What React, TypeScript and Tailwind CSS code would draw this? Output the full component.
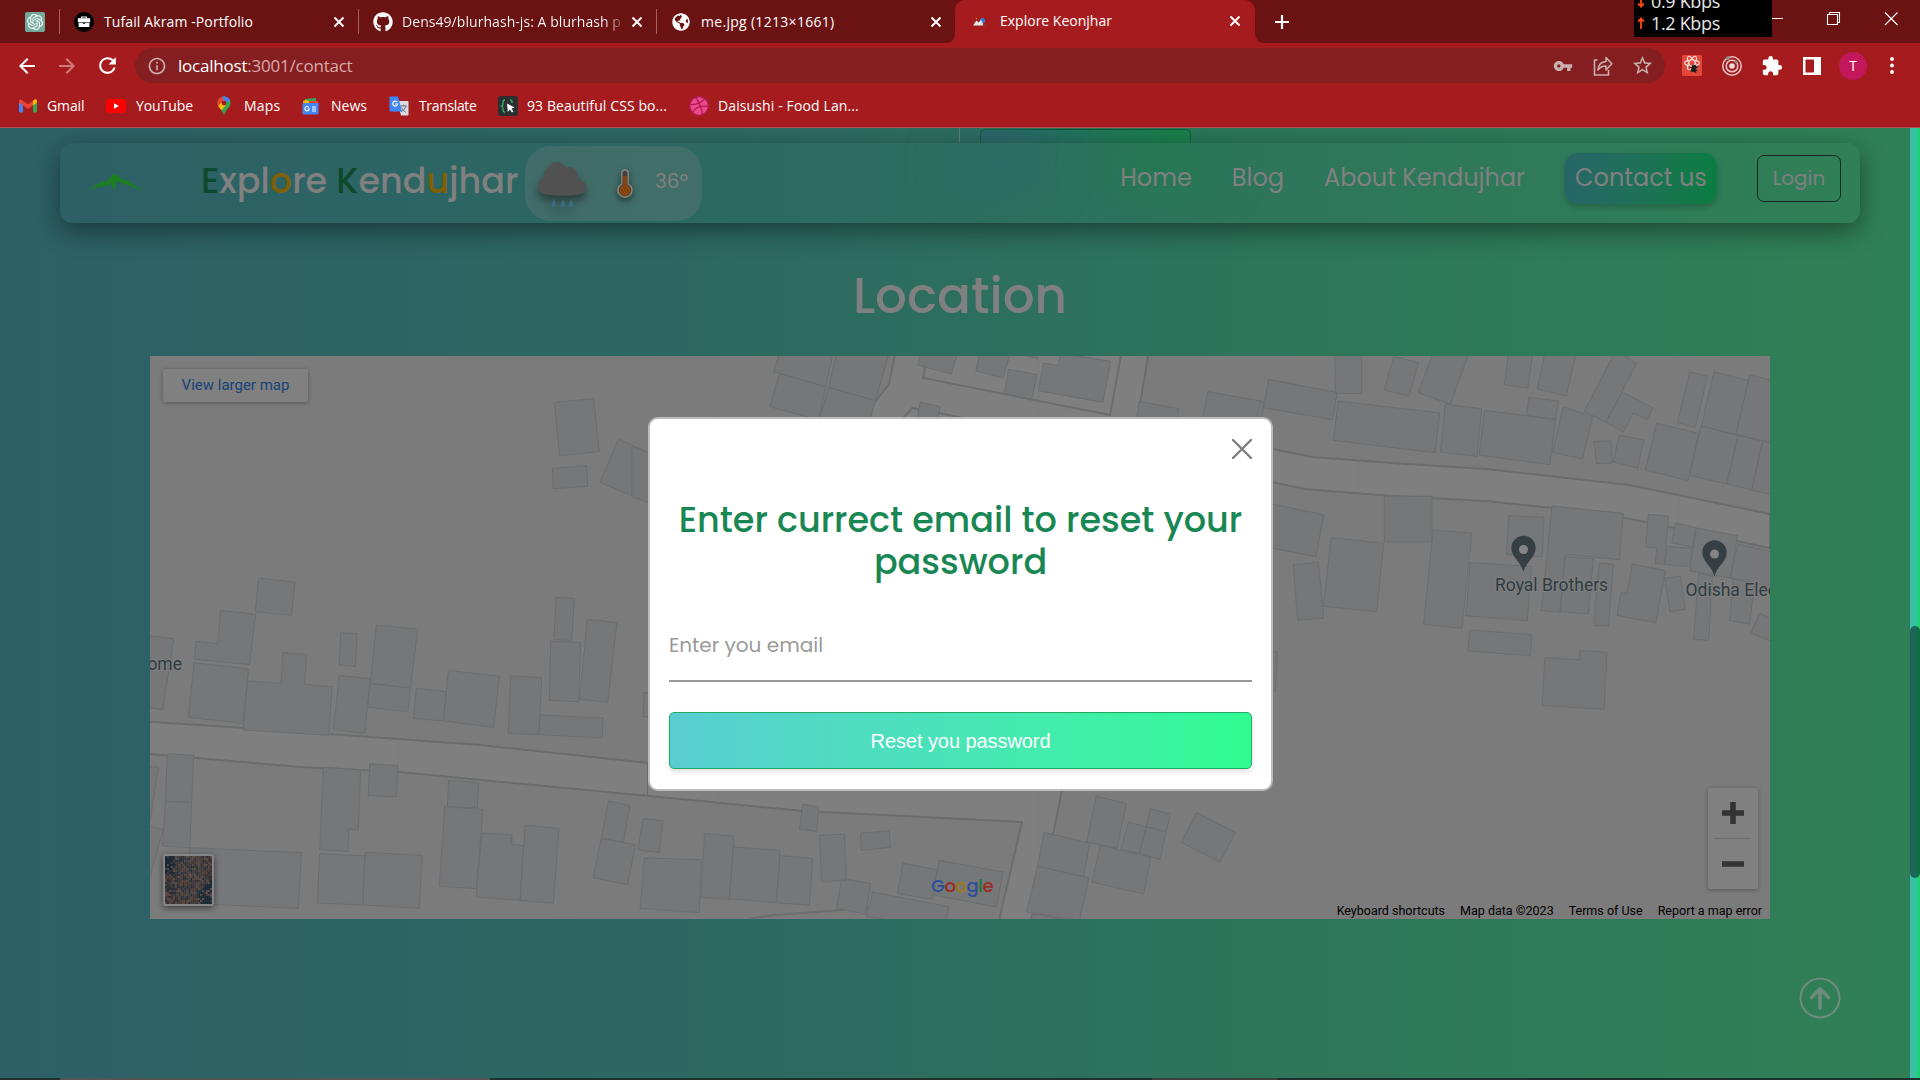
import React from "react";
import { SiOpenai, SiDribbble } from "react-icons/si";
import { FaGithub, FaGlobeAmericas } from "react-icons/fa";
import { MdVpnKey, MdExtension, MdStarOutline, MdArrowBack, MdArrowForward, MdRefresh, MdInfoOutline } from "react-icons/md";

/* ---------- Browser chrome ---------- */

function CloseGlyph() {
  return (
    <svg viewBox="0 0 12 12" className="h-3 w-3 shrink-0">
      <path d="M1.5 1.5l9 9M10.5 1.5l-9 9" stroke="#fff" strokeWidth="1.9" />
    </svg>
  );
}

function PortfolioIcon() {
  return (
    <svg viewBox="0 0 20 20" className="h-5 w-5 shrink-0">
      <circle cx="10" cy="10" r="10" fill="#000" />
      <path d="M7.6 6.4V5h4.8v1.4" fill="none" stroke="#fff" strokeWidth="1.1" />
      <rect x="3.8" y="6.2" width="12.4" height="4" rx=".6" fill="#fff" />
      <path d="M4.6 10.8h4.2v1h2.4v-1h4.2v3.4q0 .8-.8.8H5.4q-.8 0-.8-.8z" fill="#fff" />
    </svg>
  );
}

function MountainFavicon() {
  return (
    <svg viewBox="0 0 16 12" className="h-3 w-4 shrink-0">
      <circle cx="10.500" cy="5.500" r="2.600" fill="#2f7fd6" />
      <path d="M1 10.500l3.500-5 2 2 2.500-2.500 3 5.500z" fill="#e6e6e6" />
      <path d="M3.500 2.500l2 1-1 1.500z" fill="#a5762b" />
      <path d="M11.500 8.500l3 2.500h-4z" fill="#7d3b2c" />
    </svg>
  );
}

function TabStrip() {
  return (
    <div className="relative flex h-[43px] w-full items-center bg-[#6b1213] text-[14px] text-white">
      <div className="flex h-[42px] w-[60px] shrink-0 items-center pl-[25px]">
        <span className="flex h-5 w-5 items-center justify-center rounded-[2px] bg-[#74aa9c]">
          <SiOpenai className="h-4 w-4" />
        </span>
        <span className="ml-[14px] h-[25px] w-px bg-[#a3605f]" />
      </div>
      <div className="flex h-[42px] w-[299px] shrink-0 items-center pl-[14px]">
        <PortfolioIcon />
        <span className="mb-px ml-[10px] w-[229px] whitespace-nowrap tracking-[0.11px]">Tufail Akram -Portfolio</span>
        <CloseGlyph />
        <span className="ml-[13px] h-[25px] w-px bg-[#a3605f]" />
      </div>
      <div className="flex h-[42px] w-[297px] shrink-0 items-center pl-[14px]">
        <FaGithub className="h-5 w-5 shrink-0" />
        <span className="mb-px ml-[9px] w-[221px] shrink-0 overflow-hidden bg-[linear-gradient(90deg,#fff_92%,#ffffff20_100%)] bg-clip-text whitespace-nowrap tracking-[0.056px] text-transparent">
          Dens49/blurhash-js: A blurhash p
        </span>
        <span className="ml-[8px] flex"><CloseGlyph /></span>
        <span className="ml-[13px] h-[25px] w-px shrink-0 bg-[#a3605f]" />
      </div>
      <div className="flex h-[42px] w-[299px] shrink-0 items-center pl-[16px]">
        <FaGlobeAmericas className="h-[18px] w-[18px] shrink-0" />
        <span className="mb-px ml-[11px] w-[229px] whitespace-nowrap tracking-[0.3px]">me.jpg (1213×1661)</span>
        <CloseGlyph />
      </div>
      <div className="relative flex h-[43px] w-[300px] shrink-0 items-center rounded-t-[10px] bg-[#a61c1e] pb-px pl-[17px]">
        <svg viewBox="0 0 320 10" className="absolute -left-[10px] bottom-0 h-[10px] w-[320px]">
          <path d="M0 10Q10 10 10 0V10zM320 10Q310 10 310 0V10z" fill="#a61c1e" />
        </svg>
        <MountainFavicon />
        <span className="mb-px ml-[12px] w-[229px] whitespace-nowrap">Explore Keonjhar</span>
        <CloseGlyph />
      </div>
      <svg viewBox="0 0 16 16" className="ml-[19px] h-4 w-4">
        <path d="M8 1v14M1 8h14" stroke="#fff" strokeWidth="2.2" />
      </svg>
      <div className="ml-auto flex h-[37px] w-[138px] flex-col justify-end self-start overflow-hidden bg-black pb-[3px] pl-[3px] text-[18px] leading-[22px] tracking-[-0.33px] text-[#e6e6e6]">
        {["0.9 Kbps", "1.2 Kbps"].map((rate, i) => (
          <div key={rate} className="flex shrink-0 items-center">
            <svg viewBox="0 0 8 14" className="mr-[6px] h-[13px] w-2">
              <path d={i ? "M4 13V2M1 5l3-3.5L7 5" : "M4 1v11M1 9l3 3.5L7 9"} stroke="#ff4a12" strokeWidth="1.9" fill="none" />
            </svg>
            {rate}
          </div>
        ))}
      </div>
      <div className="flex h-[37px] w-[148px] items-center self-start">
        <svg viewBox="0 0 148 37" className="h-[37px] w-[148px]" fill="none" stroke="#fff" strokeWidth="1.1">
          <path d="M0 18.500h11M55.500 14.500h10v10h-10zM57.500 14.500v-2h10v10h-2M113 12.500l12.500 12.500M125.500 12.500L113 25" />
        </svg>
      </div>
    </div>
  );
}

function AddressBar() {
  return (
    <div className="flex h-[45px] w-full items-center bg-[#a61c1e] pl-[15px] text-white">
      <MdArrowBack className="h-6 w-6" />
      <MdArrowForward className="ml-4 h-6 w-6 text-[#d07a7b]" />
      <MdRefresh className="ml-[16px] h-[25px] w-[25px]" />
      <div className="ml-[15px] flex h-[35px] w-[1530px] items-center rounded-full bg-[#841e20] pl-[12px] text-[#c9b0b0]">
        <MdInfoOutline className="h-[20px] w-[20px]" />
        <span className="ml-[11px] text-[17px] tracking-[-0.22px] text-[#dba9a9]">
          <span className="text-white">localhost</span>:3001/contact
        </span>
        <MdVpnKey className="ml-auto h-5 w-5" />
        <svg viewBox="0 0 20 22" className="ml-[20px] h-[22px] w-5" fill="none" stroke="currentColor" strokeWidth="1.600">
          <path d="M4.500 5H1.500v15h14v-5" />
          <path d="M5 15q.5-8 8-8.500V2.500l5.800 6.200L13 15v-4q-5-.2-8 4z" strokeLinejoin="round" />
        </svg>
        <MdStarOutline className="mr-[11px] ml-[18px] h-[23px] w-[23px]" />
      </div>
      <svg viewBox="0 0 20 21" className="ml-[17px] h-[21px] w-5">
        <rect width="20" height="21" rx="1.500" fill="#e2473a" />
        <g fill="none" stroke="#f6dcd8" strokeWidth="1.100">
          <ellipse cx="10" cy="8" rx="7.500" ry="3" />
          <ellipse cx="10" cy="8" rx="7.500" ry="3" transform="rotate(60 10 8)" />
          <ellipse cx="10" cy="8" rx="7.500" ry="3" transform="rotate(120 10 8)" />
        </g>
        <ellipse cx="12" cy="13.500" rx="2.600" ry="3.800" fill="#1d1d1d" transform="rotate(20 12 13.500)" />
        <path d="M7.500 11.500l8 4.500M8.500 16.500l7.500-5M10 10l4 8" stroke="#1d1d1d" />
      </svg>
      <svg viewBox="0 0 20 20" className="ml-[20px] h-5 w-5" fill="none" stroke="#e5c6c6" strokeWidth="1.500">
        <circle cx="10" cy="10" r="9.200" />
        <circle cx="10" cy="10" r="5.800" />
        <circle cx="10" cy="10" r="2.800" fill="#e8dede" stroke="none" />
        <circle cx="5.800" cy="2.200" r="2" fill="#8d8d8d" stroke="none" />
        <circle cx="14" cy="6" r="1.500" fill="#8d8d8d" stroke="none" />
      </svg>
      <MdExtension className="ml-[19px] h-[22px] w-[22px]" />
      <svg viewBox="0 0 18 18" className="ml-[20px] h-[18px] w-[18px]">
        <path d="M0 0h18v18H0zM2.500 2.500v13h8.500v-13z" fill="#fff" fillRule="evenodd" />
      </svg>
      <span className="ml-[18px] flex h-7 w-7 items-center justify-center rounded-full bg-[#c2185b] text-[14px]">T</span>
      <svg viewBox="0 0 4 17" className="ml-[23px] h-[17px] w-1" fill="#fff">
        <circle cx="2" cy="2" r="1.900" />
        <circle cx="2" cy="8.500" r="1.900" />
        <circle cx="2" cy="15" r="1.900" />
      </svg>
    </div>
  );
}

const bookmarkIcons = {
  gmail: (
    <svg viewBox="0 0 20 20" className="h-5 w-5">
      <path d="M0 4.500V15q0 1.500 1.500 1.500H4V8z" fill="#4285f4" />
      <path d="M18 4.500V15q0 1.500-1.500 1.500H14V8z" fill="#34a853" />
      <path d="M0 5q.5-3 3-1l6 4.500L15 4v4.500L9 13 0 6.500z" fill="#ea4335" />
      <path d="M14 4.800q3.500-3 4 .2v1.500L14 9.500z" fill="#fbbc04" />
    </svg>
  ),
  youtube: (
    <svg viewBox="0 0 20 20" className="h-5 w-5">
      <rect x="0" y="3" width="20" height="14" rx="3.500" fill="#f00" />
      <path d="M8 7.200l5 2.800-5 2.800z" fill="#fff" />
    </svg>
  ),
  maps: (
    <svg viewBox="0 0 20 20" className="h-5 w-5">
      <clipPath id="mapspin"><path d="M9 0.500a6.500 6.500 0 0 1 6.500 6.500c0 4.500-5 6-6.500 12.500C7.500 13 2.500 11.500 2.500 7A6.500 6.500 0 0 1 9 0.500z" /></clipPath>
      <g clipPath="url(#mapspin)">
        <path d="M0 0h20v20H0z" fill="#34a853" />
        <path d="M5 0h13v4L9 7z" fill="#4285f4" />
        <path d="M0 0h7l2 5-5 6-4-2z" fill="#ea4335" />
        <path d="M2 11l7-7 2 5-5 6z" fill="#fbbc04" />
        <path d="M7 0h10L13 5z" fill="#4285f4" />
      </g>
      <circle cx="9" cy="7" r="2.400" fill="#a61c1e" />
    </svg>
  ),
  news: (
    <svg viewBox="0 0 20 20" className="h-5 w-5">
      <path d="M4 3l11-1v6H4z" fill="#34a853" />
      <path d="M2 5l3-1 9 3-1 4H3z" fill="#fbbc04" />
      <path d="M8 5h9v6H8z" fill="#ea4335" />
      <rect x="1.500" y="7" width="16" height="11.500" rx="1.200" fill="#4285f4" />
      <path d="M8 11.500A2.200 2.200 0 1 0 8.300 13H6.500M11 11h4M11 13h4M11 15h4" stroke="#fff" strokeWidth="1.100" fill="none" />
    </svg>
  ),
  translate: (
    <svg viewBox="0 0 20 20" className="h-5 w-5">
      <path d="M8 5h10.500q1 0 1 1v12.500q0 1-1 1H12z" fill="#dadce0" />
      <path d="M11 10h7M14.500 8.500V10M17 10q-1 4-5 6M12.500 11.500q1 3 4.500 5" stroke="#6d7680" fill="none" />
      <path d="M1.500 0.500H9l4 15H1.500q-1 0-1-1v-13q0-1 1-1z" fill="#4285f4" />
      <path d="M8.200 6A2.500 2.500 0 1 0 8.700 8H6.300" stroke="#fff" strokeWidth="1.200" fill="none" />
    </svg>
  ),
  css: (
    <svg viewBox="0 0 20 20" className="h-5 w-5">
      <rect width="20" height="20" rx="3" fill="#2b2f30" />
      <path d="M7 4Q5 4 5 6v2q0 1.500-1.500 2Q5 10.500 5 12v2q0 2 2 2M12 4q2 0 2 2v1" stroke="#33b36b" strokeWidth="1.300" fill="none" />
      <path d="M9 7.500l7.500 4-3 1 2 3.200-1.600.9-1.900-3.200L9.800 16z" fill="#fff" />
    </svg>
  ),
  dribbble: (
    <svg viewBox="0 0 20 20" className="h-5 w-5" fill="none" stroke="#b31b59" strokeWidth="1.300">
      <circle cx="10" cy="10" r="9.300" fill="#ea4c89" />
      <path d="M6.500 1.500Q12 8 13.500 18.500M1 8.500q9 .5 14.500-5.500M3.500 16.500q4-8 15.500-6" />
    </svg>
  ),
};

function BookmarksBar() {
  return (
    <div className="flex h-[40px] w-full items-center border-b border-[#b5504f] bg-[#a61c1e] pb-[4px] pl-[19px] text-[14px] text-white">
      <div className="flex w-[87px] items-center gap-[8px]">{bookmarkIcons.gmail}<span className="tracking-[-0.1px]">Gmail</span></div>
      <div className="flex w-[109px] items-center gap-[10px]">{bookmarkIcons.youtube}<span className="tracking-[-0.08px]">YouTube</span></div>
      <div className="flex w-[86px] items-center gap-[9px]">{bookmarkIcons.maps}<span className="tracking-[0.22px]">Maps</span></div>
      <div className="flex w-[88px] items-center gap-[10px]">{bookmarkIcons.news}<span>News</span></div>
      <div className="flex w-[109px] items-center gap-[10px]">{bookmarkIcons.translate}<span className="tracking-[-0.35px]">Translate</span></div>
      <div className="flex w-[191px] items-center gap-[9px]">{bookmarkIcons.css}<span className="tracking-[0.1px]">93 Beautiful CSS bo...</span></div>
      <div className="flex items-center gap-[9px]">{bookmarkIcons.dribbble}<span className="tracking-[0.12px]">Daisushi - Food Lan...</span></div>
    </div>
  );
}

/* ---------- Site header ---------- */

function WeatherPill() {
  return (
    <div className="flex h-[75px] w-[177px] items-center rounded-[26px] bg-[#808080]/25 pl-[12px]">
      <svg viewBox="0 0 52 50" className="mt-1 h-[50px] w-[52px] drop-shadow-[0_6px_4px_rgba(0,0,0,0.4)]">
        <path d="M9 34.500Q1 33 1 26q0-7 7-8.500Q6 11 11 8q3-6 9-6 7 0 9 6 3-2 7 0 5 2 5 8 0 2-.5 3.500Q49 20 49 27q0 6-7 7.500Q25 37 9 34.500z" fill="#515151" />
        <path d="M17 39l-2.500 6a2.300 2.300 0 1 0 4.600 0zM26 39l-2.500 6a2.300 2.300 0 1 0 4.600 0zM34 39l-2.500 6a2.300 2.300 0 1 0 4.600 0z" fill="#3d6b85" />
      </svg>
      <svg viewBox="0 0 16 30" className="mt-px ml-[28px] h-[30px] w-4 drop-shadow-[0_3px_3px_rgba(0,0,0,0.5)]">
        <path d="M4.800 4.200a3.200 3.200 0 0 1 6.400 0V15a7 7 0 1 1-6.400 0z" fill="#4b3d34" stroke="#8b8b8b" strokeWidth="1.300" />
        <path d="M6.200 7h3.600v9a5.700 5.700 0 1 1-3.600 0z" fill="#85450f" />
      </svg>
      <span className="mb-[4px] ml-[22px] text-[20px] text-[#808080]">36º</span>
    </div>
  );
}

function SiteHeader() {
  return (
    <header className="relative flex h-[80px] w-[1800px] items-center overflow-visible rounded-[12px] shadow-[0_8px_26px_rgba(0,0,0,0.42)]">
      <svg viewBox="0 0 60 20" className="mt-[-3px] ml-[27px] h-5 w-[60px]">
        <path d="M0 18.500L16 9l3 1 7-8 2 .5 2 1 7 5 3-.5 8 6 10 5-13-4-5-3-3 1-5-4-1 2-3-2 1 10-5-6 1-4-4 5-3-1-2 2-3-.5z" fill="#1b7f1f" />
      </svg>
      <h1 className="mb-[4px] ml-[54px] w-[324px] text-[35px] font-medium whitespace-nowrap text-[#808080]">
        <span className="text-[#0d4a2b]">E</span>xpl<span className="text-[#806004]">o</span>re{" "}
        <span className="text-[#0d4a2b]">K</span>end<span className="text-[#806004]">u</span>jhar
      </h1>
      <WeatherPill />
      <nav className="mb-[10px] ml-auto flex items-center gap-10 pr-[19px] text-[24px] whitespace-nowrap text-[#808080]">
        <a>Home</a>
        <a>Blog</a>
        <a>About Kendujhar</a>
        <a className="flex h-[51px] w-[152px] items-center justify-center rounded-[13px] bg-linear-to-r from-[#286568] to-[#0a7d40] shadow-[0_3px_6px_rgba(0,0,0,0.2)]">Contact us</a>
        <a className="flex h-[47px] w-[84px] items-center justify-center rounded-[7px] border border-[#122a24] text-[20px]">Login</a>
      </nav>
    </header>
  );
}

/* ---------- Map ---------- */

const sheetNorthWest =
  "M1243 187L1361 176 1378 335 1259 347zM1237 385L1340 377 1343 439 1240 446zM1435 298L1560 352V502L1380 427z" +
  "M356 714L465 727 454 826 346 815z";
const sheetSouthWest =
  "M-10 12L101 26 68 239-10 228zM242-59L347-47 328 104 163 87 169 34 233 41zM162 98L326 117 308 280 145 262z" +
  "M323 153L424 160 429 68 500 73 494 163 576 170 567 316 310 300zM602 8L651 11 646 109 598 105z" +
  "M709-15L833-2 811 174 691 160zM691 160L811 174 804 245 683 232zM598 136L691 146 674 310 580 298z" +
  "M829 175L918 185 910 273 820 265zM925 121L1078 139 1061 292 910 273zM1112 138L1205 143 1197 314 1105 310z" +
  "M1200 255L1389 264 1387 324 1197 314zM1248-98L1303-95 1295 31 1242 29zM1232 34L1322 37 1316 215 1228 211z" +
  "M1342-32L1431-22 1403 217 1319 208zM1516 188L1560 190V265L1510 260z" +
  "M82 371L161 376 155 517 76 514zM76 514L155 517 149 653 68 648zM-10 405L55 412 30 575-10 720zM-10 576L69 599 20 780-10 780z" +
  "M149 653L485 668 475 835 140 820zM550 412L662 419 655 599 626 598 624 664 539 659zM689 401L774 406 769 500 685 497z" +
  "M539 671L675 678 668 825 532 819zM676 667L847 676 838 835 668 825zM926 451L1016 458 1012 534 922 530z" +
  "M914 529L1029 539 1009 776 898 769zM1026 609L1116 615 1115 644 1150 647 1140 811 1009 801zM1156 586L1257 595 1240 820 1140 811z" +
  "M1405 513L1470 527 1450 637 1384 625zM1384 625L1486 645 1463 764 1359 743z";
const sheetNorth =
  "M345 30L475 30 455 140 327 95zM342 100L455 140 437 240 318 200zM484 30L612 30 577 182 462 142zM462 142L577 182 563 240 440 235z" +
  "M688 30L780 30 763 102 681 75zM834 30L910 30 889 114 823 93zM903 88L972 104 960 178 893 160zM945 47L975 47 974 57z" +
  "M1031 40L1153 64 1134 187 976 152 989 69 1024 77zM687 186L735 200 730 240 680 232zM1224 184L1320 206 1315 240 1215 240z" +
  "M1391 155L1530 185 1520 240 1379 235zM1540 120L1600 130V210L1530 201z" +
  "M-20 320L25 340V490L-20 470zM10 1058L30 1060V1130L8 1130z";
const sheetNorthEast =
  "M26 119L232 157 217 239 10 203zM224 30L305 30V160L227 160zM401 50L475 67 448 168 373 150zM522 30L630 30 571 193 475 158z" +
  "M235 183L539 219 525 338 220 301zM556 193L665 206 651 349 541 336zM674 211L886 238 870 374 657 345zM806 172L895 183 886 238 800 227z" +
  "M747 30L820 30 803 145 733 134zM857 30L950 30 919 167 832 147zM910 200L998 230 968 357 878 337z" +
  "M1068 30L1129 71 1038 247 973 214zM1087 157L1178 203 1161 239 1120 219 1090 276 1038 247zM1002 305L1052 302 1057 369 1010 371z" +
  "M1077 286L1151 300 1133 384 1061 366zM1190 250L1316 280 1285 422 1156 390zM1289 96L1342 109 1306 262 1252 248z" +
  "M1362 96L1465 122 1428 283 1324 258zM1469 105L1560 127V315L1428 283zM1324 258L1434 287 1400 432 1288 406zM1434 287L1508 303 1475 450 1400 432z" +
  "M1508 303L1560 312V470L1475 450zM0 185L12 187 5 235-10 235zM0 485L191 524 168 650 0 618zM100 674L175 667 191 834 113 841z" +
  "M213 593L371 610 350 815 191 799zM373 468L516 469V606H373zM519 570L635 580 606 865 491 853zM746 527L852 532 847 650 740 644z" +
  "M631 667L814 680 802 842 618 827zM629 870L815 884 811 947 624 933zM876 498L1090 520 1078 659 916 643 900 817 844 811z" +
  "M914 650L1000 657 985 822 900 815zM1018 669L1060 673 1045 859 1001 856zM1117 673L1216 691 1188 848 1071 826 1083 758 1101 760z" +
  "M1165 523L1226 529 1213 673 1186 670 1190 624 1157 620zM1247 549L1308 563 1297 621 1235 608zM1219 619L1295 625 1290 680 1215 673z" +
  "M1309 564L1432 587 1412 714 1290 692zM1434 613L1560 640 1540 740 1410 715zM1214 715L1261 709 1276 808 1230 815z" +
  "M1316 702L1357 708 1346 901 1301 898zM1420 715L1484 730 1469 852 1409 842zM1499 821L1560 845V915L1473 878z" +
  "M855 953L959 959 960 931 1041 937 1032 1108 846 1096zM30 933L53 937 46 1052 30 1052z";
const sheetSouth =
  "M7 146L56 152 47 248-5 240zM11 264L150 269 145 428 0 415zM158 191L230 198 219 388 149 382zM229 231L343 241 334 398 219 386z" +
  "M343 257L423 265 415 406 334 398zM398 103L438 110 433 184 391 178zM440 196L501 192 506 331 445 335zM540 190L610 182 614 232 543 241z" +
  "M494 325L565 341 553 432 482 415zM570 366L757 410 745 470 555 440zM644 280L728 299 716 388 631 370zM733 271L889 306 874 411 718 375z" +
  "M1118 79L1192 100 1168 235 1094 215zM990 187L1102 219 1087 320 974 289zM974 289L1100 323 1075 460 947 426zM968 430L1080 452V470H960z" +
  "M1128 226L1252 263 1234 372 1107 336zM1196 157L1240 170 1224 250 1179 238zM1250 116L1300 132 1289 185 1240 170z" +
  "M1240 170L1289 185 1274 269 1224 250zM1364 128L1459 188 1421 276 1326 217z";

function Pin({ x, y }: { x: number; y: number }) {
  return (
    <g transform={`translate(${x} ${y})`}>
      <path d="M0 18C-1.500 8-12.200 3-12.200-6.500a12.200 12.200 0 0 1 24.400 0C12.200 3 1.500 8 0 18z" fill="#363f44" />
      <circle cy="-5" r="4.500" fill="#858585" />
    </g>
  );
}

function MapDrawing() {
  return (
    <svg viewBox="150 356 1620 563" className="absolute inset-0 h-full w-full">
      <g fill="#7f7f7f" stroke="#6b6d6d" strokeWidth="2">
        <path d="M140 721L243 728 329 734 398 739 480 745 648 763V796L400 772 300 767 140 753z" />
        <path d="M648 797L640 795 803 811 1022 822 998 925H1048L1060 790V760H648z" strokeWidth="0" />
        <path d="M640 795L803 811 1022 822 998 925M1062 790L1053 835M1033 913L1029 925M748 919L775 915 870 908" fill="none" />
        <path d="M1272 449L1312 457 1392 463 1486 469 1629 485 1770 514V548L1602 513 1486 501 1392 496 1305 489 1272 482z" />
        <path d="M895 350L889 384 872 405 870 430H1140L1148 350z" strokeWidth="0" />
        <path d="M896 350L889 384 875 402M902 419L912 408 1000 425M925 367L923 378 1110 415 1122 350M1149 350L1140 405" fill="none" />
      </g>
      <g fill="#757779" stroke="#6b6d6f" strokeWidth="1">
        <path d={sheetNorthWest} transform="translate(140 340) scale(.33333)" vectorEffect="non-scaling-stroke" />
        <path d={sheetSouthWest} transform="translate(140 630) scale(.33333)" vectorEffect="non-scaling-stroke" />
        <path d={sheetNorth} transform="translate(640 340) scale(.40816 .33333)" vectorEffect="non-scaling-stroke" />
        <path d={sheetNorthEast} transform="translate(1260 340) scale(.33333)" vectorEffect="non-scaling-stroke" />
        <path d={sheetSouth} transform="translate(640 770) scale(.40816 .33333)" vectorEffect="non-scaling-stroke" />
      </g>
      <path d="M398.500 356V919M718.500 356V919M1038.500 356V919M1358.500 356V919M1678.500 356V919M150 656.500H1770" stroke="#777" strokeOpacity=".5" />
      <Pin x={1523.5} y={554.5} />
      <Pin x={1714.5} y={559} />
      <g className="font-[Roboto]" fill="#2f3b41" fontSize="17.500" stroke="#7f7f7f" strokeWidth="2" paintOrder="stroke">
        <text x="182" y="670" textAnchor="end">Home</text>
        <text x="1495" y="591">Royal Brothers</text>
        <text x="1685.500" y="595.500">Odisha Electronics</text>
      </g>
    </svg>
  );
}

const terrain = ["#3c3532", "#4a3d39", "#2c3036", "#554641", "#26303a", "#3f3a38", "#5a4943", "#46393a"];

function noise(x: number, y: number) {
  const v = Math.sin(x * 12.9898 + y * 78.233) * 43758.5453;
  return v - Math.floor(v);
}

function SatelliteThumb() {
  const cells = Array.from({ length: 576 }, (_, i) => {
    const cx = i % 24;
    const cy = Math.floor(i / 24);
    const n = noise(cx, cy);
    const water = (cx + cy > 34 && cx > 16) || (cx < 5 && cy < 9);
    return <rect key={i} x={cx * 2} y={cy * 2} width="2.1" height="2.1" fill={water && n < 0.75 ? "#1a2935" : terrain[Math.floor(n * 8)]} />;
  });
  return (
    <svg viewBox="0 0 48 48" className="h-[52px] w-[51px] rounded-[3px] border-2 border-[#858585] shadow-[0_2px_6px_rgba(0,0,0,0.5)]" preserveAspectRatio="none">
      {cells}
    </svg>
  );
}

function MapPanel() {
  return (
    <div className="relative flex h-[563px] w-[1620px] flex-col justify-between overflow-hidden bg-[#7b7b7b] font-[Roboto]">
      <MapDrawing />
      <div className="relative mt-[13px] ml-[13px] flex h-[33px] w-[145px] items-center justify-center rounded-[2px] bg-[#808080] text-[15px] text-[#184378] shadow-[0_1px_4px_rgba(0,0,0,0.3)]">
        View larger map
      </div>
      <div className="relative flex h-[132px] items-start">
        <div className="mt-[67px] ml-[13px]"><SatelliteThumb /></div>
        <div className="mt-[87px] ml-[717px] flex font-[Poppins] text-[18px] leading-6 font-medium tracking-[-0.5px]">
          <span className="text-[#2a4f9e]">G</span>
          <span className="text-[#9c2b24]">o</span>
          <span className="text-[#a07a10]">o</span>
          <span className="text-[#2a4f9e]">g</span>
          <span className="text-[#1f7a36]">l</span>
          <span className="text-[#9c2b24]">e</span>
        </div>
        <div className="ml-auto flex h-full flex-col items-end justify-between">
          <div className="mt-px mr-[12px] flex h-[101px] w-[50px] flex-col items-center rounded-[2px] bg-[#808080] shadow-[0_1px_4px_rgba(0,0,0,0.3)]">
            <svg viewBox="0 0 50 101" className="h-[101px] w-[50px]">
              <path d="M14 25H36M25 14V36M14 76H36" stroke="#333" strokeWidth="5.500" />
              <path d="M6 50.500H43" stroke="#6c6c6c" />
            </svg>
          </div>
          <div className="flex gap-[15px] pr-[8px] pb-[1px] text-[12.5px] leading-[15px] text-black">
            <span>Keyboard shortcuts</span>
            <span>Map data ©2023</span>
            <span>Terms of Use</span>
            <span>Report a map error</span>
          </div>
        </div>
      </div>
    </div>
  );
}

/* ---------- Dialog ---------- */

function ResetDialog() {
  return (
    <section className="flex h-[374px] w-[625px] flex-col rounded-[10px] border-2 border-[#bcbcbc] bg-white px-[19px] font-[Poppins]">
      <svg viewBox="0 0 20 20" className="mt-[20px] h-5 w-5 self-end">
        <path d="M1 1l18 18M19 1L1 19" stroke="#7d7d7d" strokeWidth="2.400" strokeLinecap="round" />
      </svg>
      <h2 className="mt-[40px] text-center text-[35px] leading-[42px] font-medium text-[#198754]">
        Enter currect email to reset your password
      </h2>
      <div className="mt-[19px] flex h-[80px] items-center border-b-2 border-[#999] text-[20px] text-[#999]">
        <span className="mt-[8px]">Enter you email</span>
      </div>
      <button className="mt-[30px] h-[57px] w-full rounded-[5px] border border-[#22a862] bg-linear-to-r from-[#59cdd2] to-[#30fc92] font-['Liberation_Sans'] text-[20px] tracking-[-0.067px] text-white shadow-[0_3px_5px_rgba(0,0,0,0.12)]">
        Reset you password
      </button>
    </section>
  );
}

/* ---------- Page ---------- */

export default function App() {
  return (
    <div className="flex h-[1080px] w-[1920px] flex-col overflow-hidden font-['Open_Sans',sans-serif]">
      <TabStrip />
      <AddressBar />
      <BookmarksBar />
      <div className="flex h-[950px] w-full">
        <main className="relative flex h-full w-[1910px] flex-col items-center overflow-hidden bg-[linear-gradient(90deg,#2d5f67_0%,#2c6861_35%,#2e765b_68%,#308056_100%)] font-[Poppins]">
          <div className="flex h-[15px] w-full pl-[959px]">
            <span className="h-full w-px bg-[#5f8578]" />
            <span className="mt-px ml-[20px] h-[14px] w-[211px] rounded-t-[5px] border border-b-0 border-[#0d5a33] bg-linear-to-r from-[#2b666a] to-[#17804a]" />
          </div>
          <div className="relative ml-[10px] w-[1800px]">
            <div className="absolute top-0 left-[895px] h-10 w-[90px] rounded-full bg-[#2b6669]/80 blur-xl" />
            <div className="absolute top-0 left-[1045px] h-10 w-[110px] rounded-full bg-[#1d7d4c]/80 blur-xl" />
            <SiteHeader />
          </div>
          <h2 className="mt-[43px] ml-[10px] text-[50px] leading-[60px] font-medium text-[#808080]">Location</h2>
          <div className="mt-[30px] ml-[10px]"><MapPanel /></div>
          <svg viewBox="0 0 42 42" className="mt-[58px] mr-[69px] h-[42px] w-[42px] self-end" fill="none" stroke="#6f8c7e">
            <circle cx="21" cy="21" r="19.500" strokeWidth="2" />
            <path d="M21 31V12M12.500 20.500L21 12l8.500 8.500" strokeWidth="3.600" strokeLinecap="round" strokeLinejoin="round" />
          </svg>
          <div className="absolute inset-0 flex items-start justify-center pt-[289px] pl-[11px]">
            <ResetDialog />
          </div>
        </main>
        <div className="flex h-full w-[10px] flex-col bg-linear-to-r from-[#43b7b8] to-[#16d273] pt-[498px]">
          <div className="h-[252px] w-full rounded-full bg-linear-to-r from-[#236065] to-[#0d7040]" />
        </div>
      </div>
      <div className="flex h-[2px] w-full bg-[#20302d]">
        <span className="ml-[60px] h-full w-[430px] bg-[#555]" />
        <span className="ml-[662px] h-full w-[125px] bg-[#3d3f3f]" />
      </div>
    </div>
  );
}
